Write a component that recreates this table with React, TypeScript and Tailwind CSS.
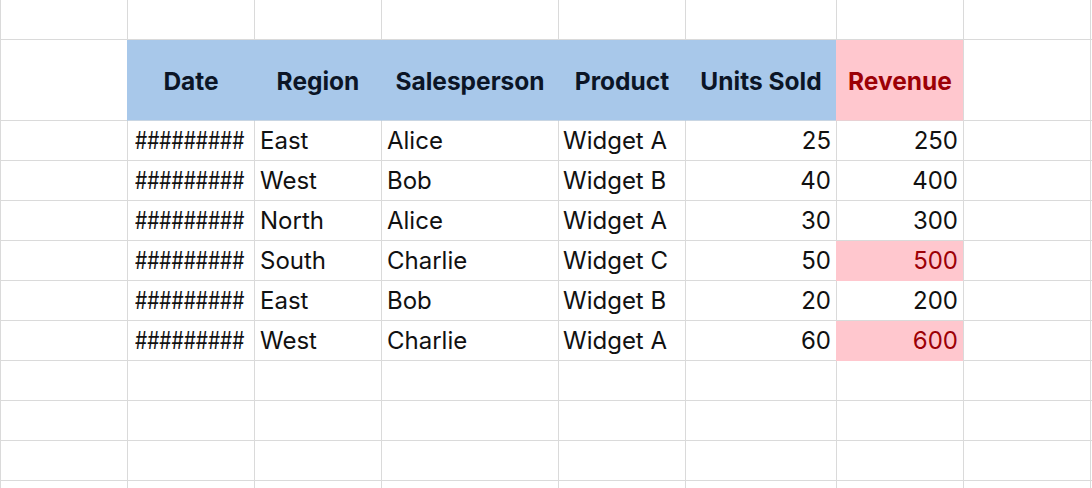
import React from "react";

const rows = [
  ["East", "Alice", "Widget A", 25, 250],
  ["West", "Bob", "Widget B", 40, 400],
  ["North", "Alice", "Widget A", 30, 300],
  ["South", "Charlie", "Widget C", 50, 500],
  ["East", "Bob", "Widget B", 20, 200],
  ["West", "Charlie", "Widget A", 60, 600],
] as const;

const widths = [127, 127, 127, 177, 127, 151, 127, 127, 2];

function Blank({ h }: { h: string }) {
  return (
    <div className="flex">
      {widths.map((w, i) => (
        <div
          key={i}
          className={`${h} shrink-0 border-l border-b border-[#dadada]`}
          style={{ width: w }}
        />
      ))}
    </div>
  );
}

export default function App() {
  const headers = ["Date", "Region", "Salesperson", "Product", "Units Sold"];
  return (
    <div
      className="w-[1092px] h-[488px] overflow-hidden bg-white text-[24px] text-[#111]"
      style={{ fontFamily: "Inter, 'Noto Sans', sans-serif" }}
    >
      <Blank h="h-[40px]" />
      {/* header row */}
      <div className="flex h-[81px]">
        <div className="w-[127px] shrink-0 border-l border-b border-[#dadada]" />
        {headers.map((t, i) => (
          <div
            key={t}
            className="shrink-0 flex items-center justify-center pt-[3px] bg-[#a8c8ea] border-l border-[#a8c8ea] border-b border-b-[#c9d6e3] font-bold text-[24.5px] text-[#0b1526]"
            style={{ width: widths[i + 1] }}
          >
            {t}
          </div>
        ))}
        <div className="w-[127px] shrink-0 flex items-center justify-center pt-[3px] bg-[#ffc7ce] border-l border-[#ffc7ce] border-b border-b-[#e9d0d3] font-bold text-[24.5px] text-[#9c0006]">
          Revenue
        </div>
        <div className="w-[127px] shrink-0 border-l border-b border-[#dadada]" />
        <div className="w-[2px] shrink-0 border-l border-b border-[#dadada]" />
      </div>
      {rows.map((r, idx) => {
        const hi = r[4] >= 500;
        return (
          <div key={idx} className="flex h-[40px]">
            <div className="w-[127px] shrink-0 border-l border-b border-[#dadada]" />
            <div className="w-[127px] shrink-0 overflow-hidden border-l border-b border-[#dadada] flex items-end pb-[1px] pl-[7px]">
              <span className="inline-block whitespace-nowrap origin-left scale-x-[0.8]">
                #########
              </span>
            </div>
            <div className="w-[127px] shrink-0 border-l border-b border-[#dadada] flex items-end pb-[1px] pl-[5px]">
              {r[0]}
            </div>
            <div className="w-[177px] shrink-0 border-l border-b border-[#dadada] flex items-end pb-[1px] pl-[5px]">
              {r[1]}
            </div>
            <div className="w-[127px] shrink-0 border-l border-b border-[#dadada] flex items-end pb-[1px] pl-[4px]">
              {r[2]}
            </div>
            <div className="w-[151px] shrink-0 border-l border-b border-[#dadada] flex items-end justify-end pb-[1px] pr-[5px]">
              {r[3]}
            </div>
            <div
              className={`w-[127px] shrink-0 border-l border-b flex items-end justify-end pb-[1px] pr-[5px] ${
                hi
                  ? "bg-[#ffc7ce] border-l-[#ffc7ce] border-b-[#ffc7ce] text-[#9c0006]"
                  : "border-[#dadada]"
              }`}
            >
              {r[4]}
            </div>
            <div className="w-[127px] shrink-0 border-l border-b border-[#dadada]" />
            <div className="w-[2px] shrink-0 border-l border-b border-[#dadada]" />
          </div>
        );
      })}
      <Blank h="h-[40px]" />
      <Blank h="h-[40px]" />
      <Blank h="h-[40px]" />
      <Blank h="h-[40px]" />
    </div>
  );
}
